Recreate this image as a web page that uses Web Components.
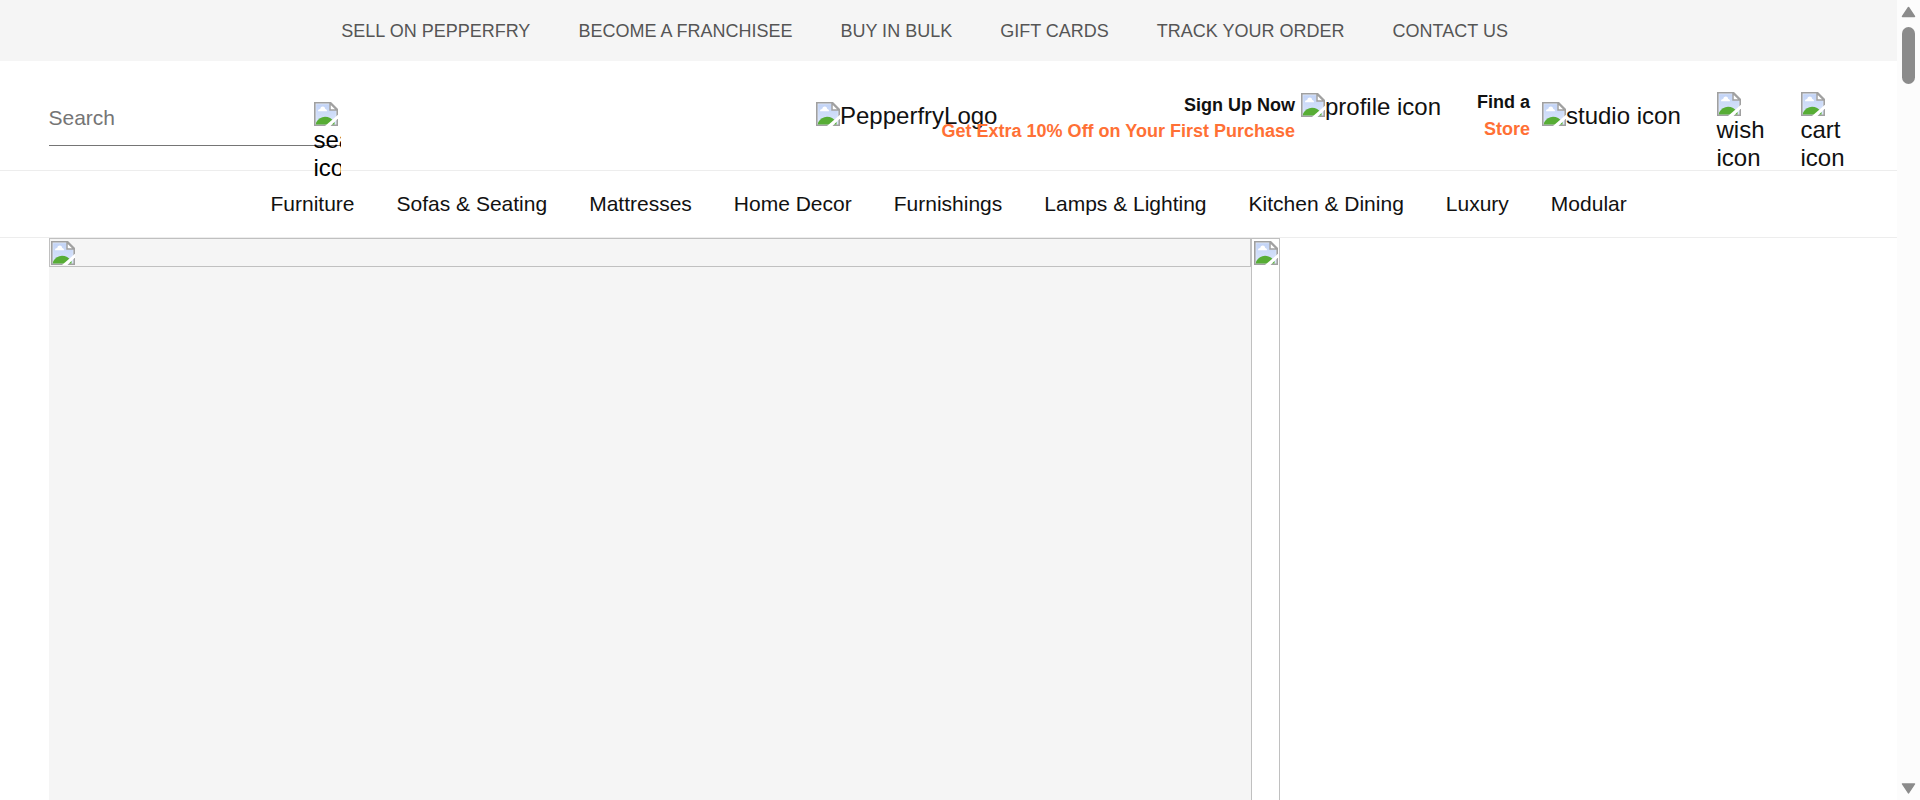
<!DOCTYPE html>
<html lang="en">
<head>
<meta charset="utf-8">
<title>Pepperfry</title>
<style>
html,body{margin:0;height:100%;overflow:hidden;background:#fff}
body{font-family:"Liberation Sans",Arial,sans-serif;color:#111}
</style>
</head>
<body>
<pf-app></pf-app>
<script>
const define=(name,html)=>customElements.define(name,class extends HTMLElement{
  constructor(){super();this.attachShadow({mode:'open'}).innerHTML=html;}
});

define('pf-broken',`<style>:host{display:block;width:24px;height:24px;flex:none}svg{display:block}</style>
<svg width="24" height="24" viewBox="0 0 24 24">
<defs><linearGradient id="g" x1="0" y1="0" x2="0" y2="1"><stop offset="0" stop-color="#c2d3f6"/><stop offset="1" stop-color="#dbe6fb"/></linearGradient></defs>
<path d="M0 0H17L24 7V24H0Z" fill="#a0a0a0"/>
<path d="M1.6 1.6H16.4L22.4 7.6V22.4H1.6Z" fill="#e6eefc"/>
<path d="M2.2 2.2H15.5V8.5H21.8V22H2.2Z" fill="url(#g)"/>
<path d="M4 9.2C4 7.8 5 7 6.2 7C6.6 5.4 7.6 4.6 8.8 4.6C10.2 4.6 11 5.5 11.2 6.9C12.4 7 13 7.8 13 9.2Z" fill="#fff"/>
<path d="M2 22.4V20.5C4.3 16.8 7.4 14.7 11 14.7C14.5 14.7 18 16.5 20.5 20V22.4Z" fill="#57ad35"/>
<path d="M16 1.2V8H22.8Z" fill="#fff" stroke="#a0a0a0" stroke-width="1.5"/>
<path d="M24 12.8V16.5L16.5 24H11Z" fill="#fff"/>
</svg>`);

define('pf-alt',`<style>:host{display:flex;align-items:flex-start;font-size:24px;line-height:27px;white-space:nowrap;flex:none}
:host([stacked]){flex-direction:column;line-height:28px;white-space:normal}:host([stacked]) span{margin-left:-.5px}</style><pf-broken></pf-broken><span><slot></slot></span>`);

define('pf-topbar',`<style>:host{display:flex;height:61px;box-sizing:border-box;padding:21px 0 0 341.3px;gap:48px;background:#f5f5f5;color:#555;font-size:18px;line-height:21px;white-space:nowrap}</style>
<span>SELL ON PEPPERFRY</span><span>BECOME A FRANCHISEE</span><span>BUY IN BULK</span><span>GIFT CARDS</span><span>TRACK YOUR ORDER</span><span>CONTACT US</span>`);

define('pf-search',`<style>:host{display:flex;flex:none;width:292px;height:61px;border-bottom:1px solid #757575;box-sizing:border-box;justify-content:space-between}
.p{color:#757575;font-size:21px;line-height:24px;padding-top:21px;margin-left:-.5px}
pf-alt{width:27px;margin-top:17px;height:84px;overflow:hidden;color:#000}</style>
<span class="p">Search</span><pf-alt stacked>search icon</pf-alt>`);

define('pf-promo',`<style>:host{display:block;flex:none;text-align:right;font-weight:700;font-size:18px;line-height:26px;white-space:nowrap}
div{color:#ff7035}</style><slot></slot><div><slot name="accent"></slot></div>`);

define('pf-header',`<style>:host{display:flex;align-items:flex-start;height:110px;box-sizing:border-box;padding-left:49px;border-bottom:1px solid #ededed}
pf-search{margin-top:24px}
.logo{margin:41px 0 0 475px;width:184px}
.sign{width:354px;margin:31px 0 0 -59px}
.prof{margin:32px 0 0 6px;width:140px}
.find{width:60px;margin:28px 0 0 29px;line-height:27px}
.studio{margin:41px 0 0 12px;width:140px}
.wish{margin:31px 0 0 35px;width:49px}
.cart{margin:31px 0 0 35px;width:49px}</style>
<pf-search></pf-search>
<pf-alt class="logo">PepperfryLogo</pf-alt>
<pf-promo class="sign">Sign Up Now<span slot="accent">Get Extra 10% Off on Your First Purchase</span></pf-promo>
<pf-alt class="prof">profile icon</pf-alt>
<pf-promo class="find">Find a<span slot="accent">Store</span></pf-promo>
<pf-alt class="studio">studio icon</pf-alt>
<pf-alt class="wish" stacked>wish icon</pf-alt>
<pf-alt class="cart" stacked>cart icon</pf-alt>`);

define('pf-nav',`<style>:host{display:flex;height:67px;box-sizing:border-box;padding:21px 0 0 270.5px;gap:42px;border-bottom:1px solid #ededed;font-size:21px;line-height:24px;white-space:nowrap}</style>
<span>Furniture</span><span>Sofas &amp; Seating</span><span>Mattresses</span><span>Home Decor</span><span>Furnishings</span><span>Lamps &amp; Lighting</span><span>Kitchen &amp; Dining</span><span>Luxury</span><span>Modular</span>`);

define('pf-hero',`<style>:host{display:flex;flex:1;padding-left:49px;min-height:0}
.main{width:1202px;background:#f5f5f5}
.slide{box-sizing:border-box;height:29px;border:1px solid silver;padding:2px 0 0 1px}
.side{box-sizing:border-box;width:29px;border:1px solid silver;border-bottom:0;padding:2px 0 0 2px}</style>
<div class="main"><div class="slide"><pf-broken></pf-broken></div></div><div class="side"><pf-broken></pf-broken></div>`);

define('pf-scrollbar',`<style>:host{display:flex;flex-direction:column;width:23px;box-sizing:border-box;background:#fcfcfc;align-items:center;padding:6px 0 5px}
svg{display:block;flex:none}.thumb{width:13px;height:57px;border-radius:7px;background:#8b8b8b;margin:9px 0 auto}</style>
<svg width="15" height="12" viewBox="0 0 15 12"><path d="M7.5 1.5L13.5 10.5H1.5Z" fill="#8b8b8b" stroke="#8b8b8b" stroke-width="1.5" stroke-linejoin="round"/></svg>
<div class="thumb"></div>
<svg width="15" height="12" viewBox="0 0 15 12"><path d="M1.5 .9H13.5L7.5 9.9Z" fill="#8b8b8b" stroke="#8b8b8b" stroke-width="1.5" stroke-linejoin="round"/></svg>`);

define('pf-app',`<style>:host{display:flex;height:100vh}.page{flex:1;min-width:0;display:flex;flex-direction:column}
.page>*{flex-shrink:0}</style>
<div class="page"><pf-topbar></pf-topbar><pf-header></pf-header><pf-nav></pf-nav><pf-hero></pf-hero></div><pf-scrollbar></pf-scrollbar>`);
</script>
</body>
</html>
